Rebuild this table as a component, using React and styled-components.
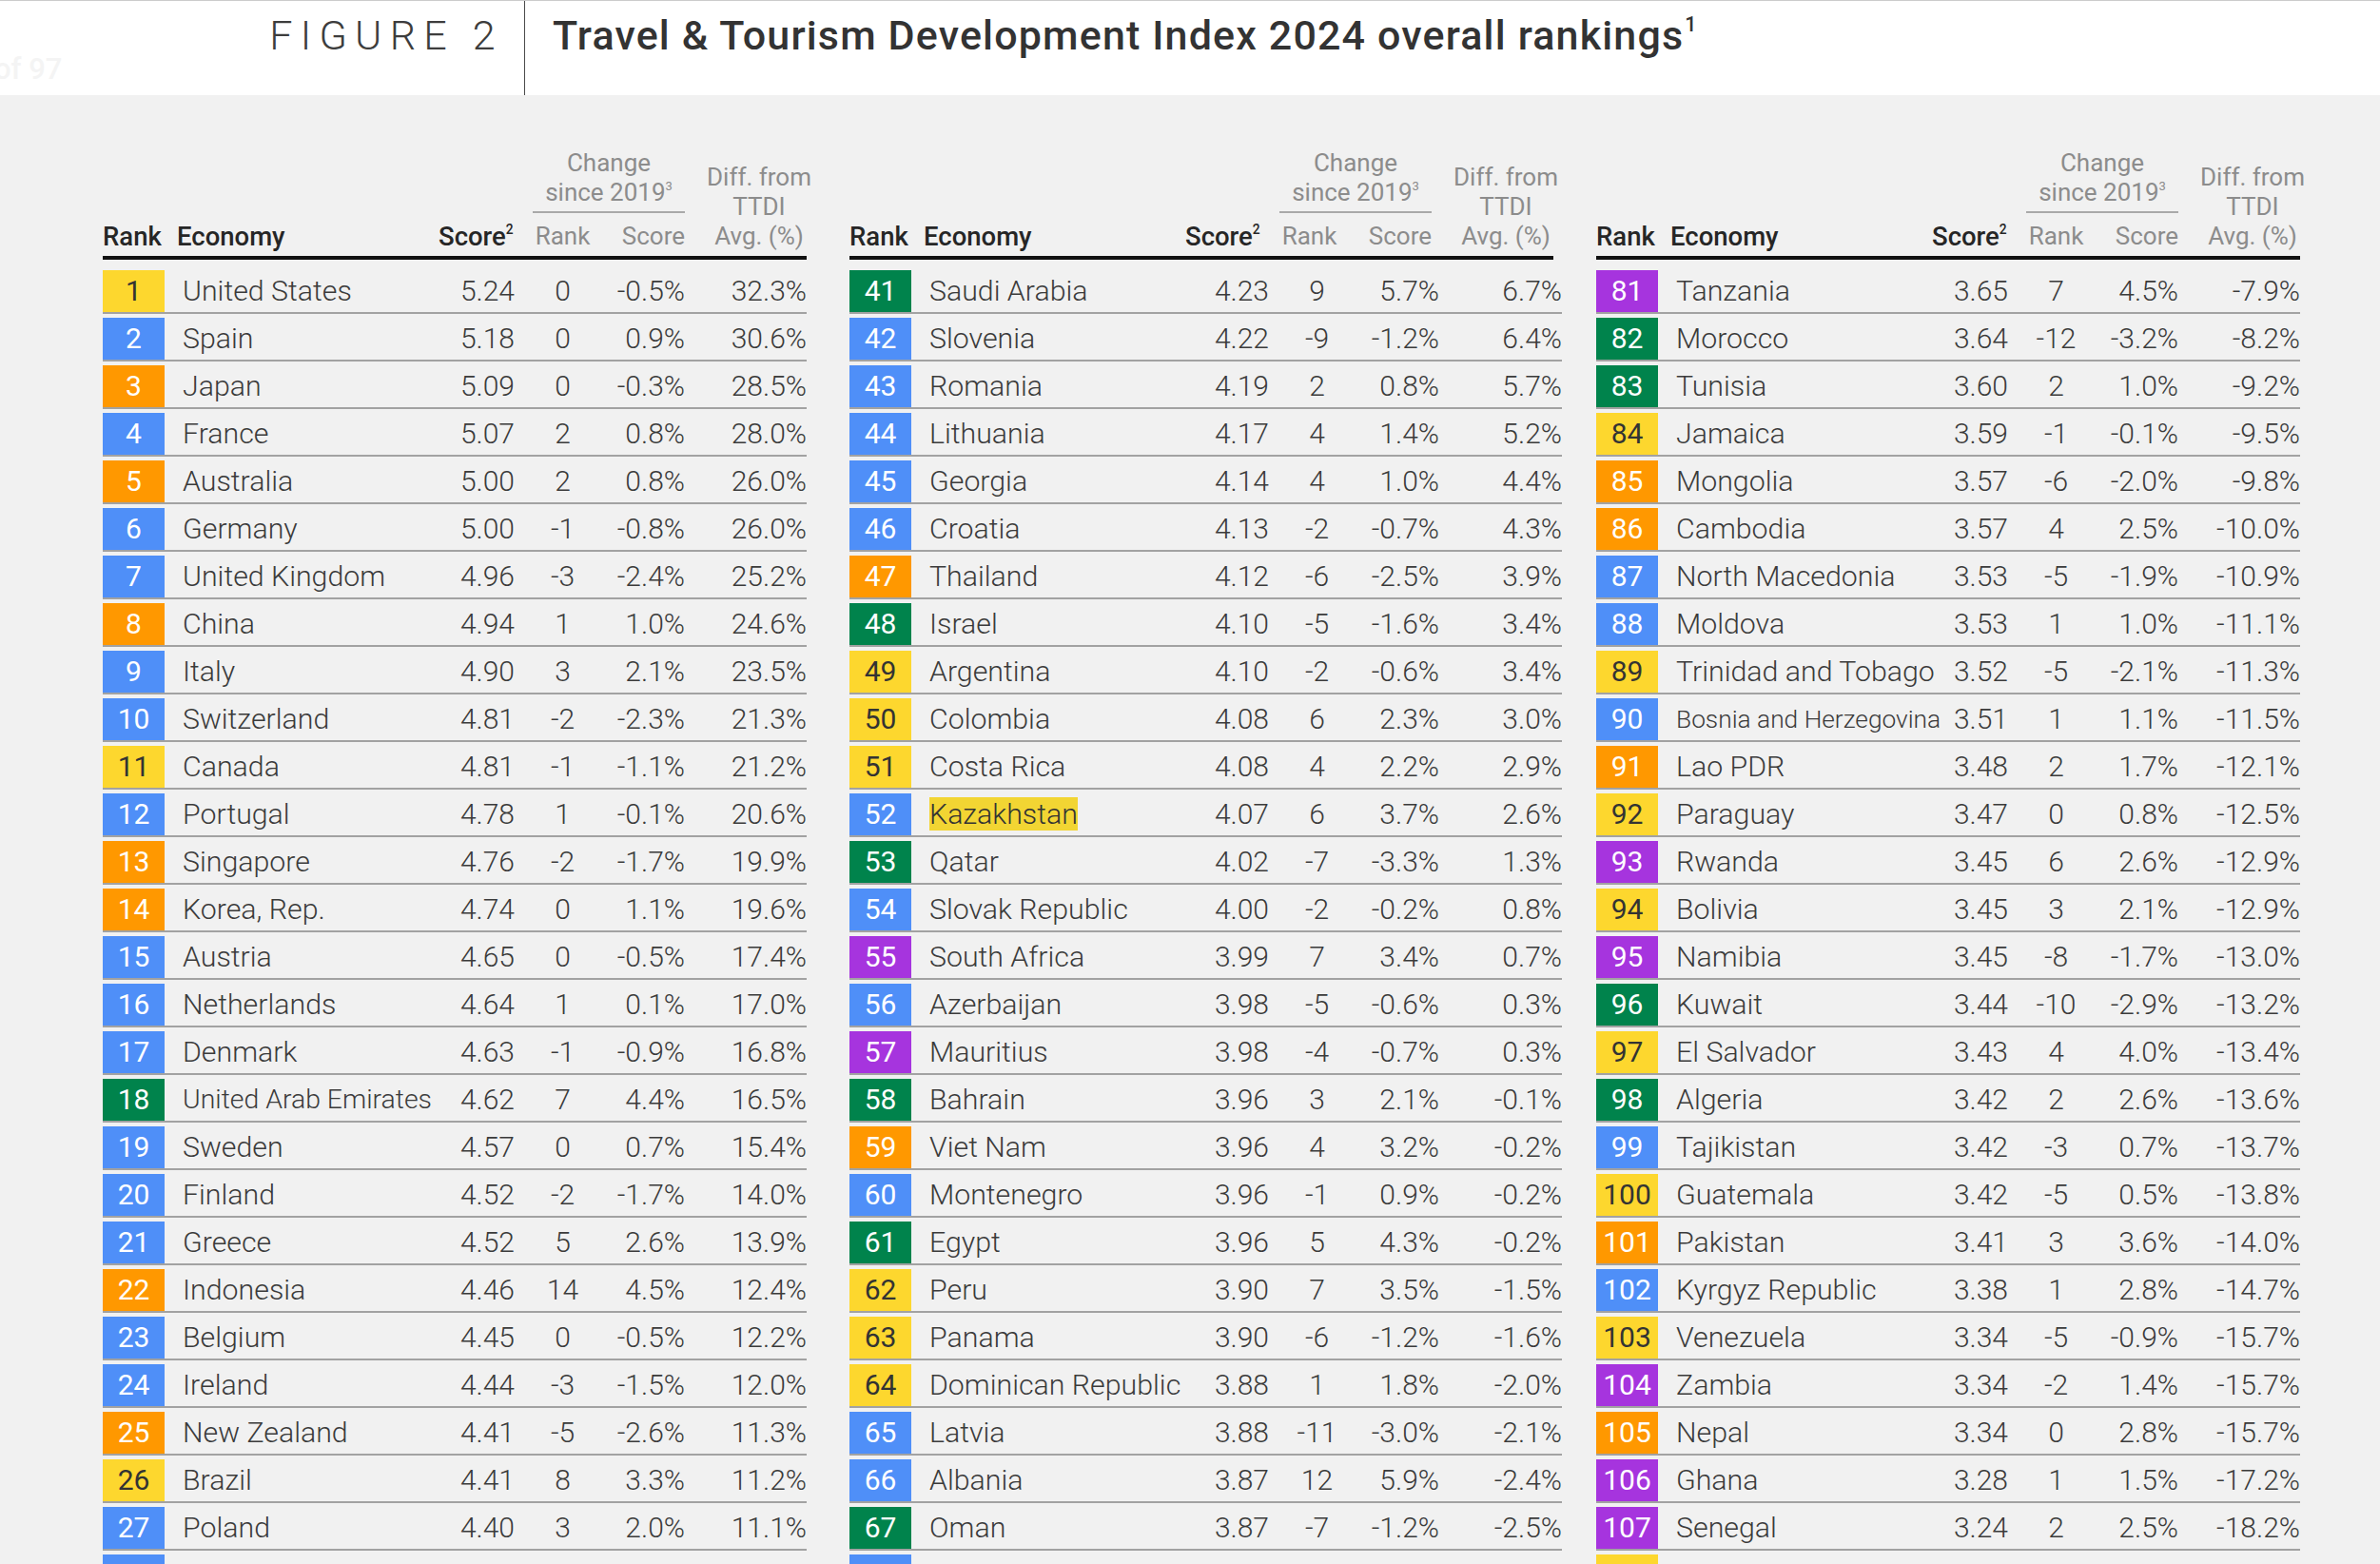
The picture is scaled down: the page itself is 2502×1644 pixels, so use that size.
import React from 'react';
import styled, { createGlobalStyle } from 'styled-components';

const GlobalStyle = createGlobalStyle`
  html, body {
    margin: 0;
    padding: 0;
    background: #f1f1f1;
  }
  body {
    font-family: Roboto, "Liberation Sans", Arial, sans-serif;
    color: #3b3b3b;
  }
`;

// region colours of the rank boxes
const REGION = {
    am: '#fdd72e',
    eu: '#4f8ff8',
    ap: '#ff9800',
    me: '#00834c',
    af: '#a634de',
};

const COLS = (wide) => `65px ${wide ? 296 : 288}px 80px 82px 97px ${wide ? 129 : 128}px`;

const Page = styled.div`
  width: 100%;
  min-width: 2502px;
  overflow: hidden;
`;

const TopBar = styled.header`
  display: flex;
  height: 99px;
  background: #fff;
  border-top: 1px solid #cbcbcb;
`;

const FigureCell = styled.div`
  box-sizing: border-box;
  width: 552px;
  flex: none;
  display: flex;
  justify-content: space-between;
  align-items: flex-start;
  padding-right: 22px;
  border-right: 1px solid #4a4a4a;
  overflow: hidden;
`;

const Ghost = styled.span`
  margin: 54px 0 0 -6px;
  font-size: 31px;
  line-height: 36px;
  font-weight: 500;
  color: #f4f4f4;
`;

const FigureLabel = styled.span`
  margin-top: 11px;
  font-size: 43px;
  line-height: 50px;
  font-weight: 300;
  letter-spacing: 8.3px;
  color: #3d3d3d;
`;

const Title = styled.h1`
  margin: 0;
  padding: 11px 0 0 29px;
  font-size: 43px;
  line-height: 50px;
  font-weight: 500;
  letter-spacing: 1.15px;
  color: #333;
  white-space: nowrap;

  sup {
    font-size: 0.5em;
    line-height: 0;
    vertical-align: 0.9em;
    margin-left: 1px;
  }
`;

const Board = styled.main`
  display: flex;
  align-items: flex-start;
  gap: 45px;
  padding: 56px 0 0 108px;
`;

const Table = styled.section`
  width: 740px;
  flex: none;
`;

const HeadGrid = styled.div`
  display: grid;
  grid-template-columns: ${COLS(false)};
  align-items: end;
  padding-bottom: 5px;
  border-bottom: 4px solid #111;
  line-height: 31px;
  white-space: nowrap;

  sup {
    font-size: 0.5em;
    line-height: 0;
    vertical-align: 0.85em;
  }
`;

const HeadStrong = styled.div`
  font-size: 27.5px;
  font-weight: 500;
  color: #262626;
  text-align: ${(p) => p.$align || 'left'};
  padding-left: ${(p) => p.$indent || 0}px;
  padding-right: ${(p) => p.$trail || 0}px;
`;

const HeadMuted = styled.div`
  font-size: 26px;
  font-weight: 400;
  color: #8c8c8c;
`;

const ChangeGroup = styled.div`
  grid-column: 4 / 6;
  display: grid;
  grid-template-columns: 82px 97px;
`;

const ChangeTitle = styled(HeadMuted)`
  grid-column: 1 / 3;
  margin: 0 0 9.5px 19px;
  padding-bottom: 3.5px;
  border-bottom: 2px solid #a9a9a9;
  text-align: center;
`;

const SubHead = styled(HeadMuted)`
  text-align: ${(p) => p.$align};
  padding-left: ${(p) => p.$indent || 0}px;
`;

const DiffHead = styled(HeadMuted)`
  text-align: center;
  padding-left: 16px;
  margin-right: -12px;
`;

const Body = styled.div`
  padding-top: 11px;
  margin-right: ${(p) => (p.$wide ? -9 : 0)}px;
`;

const Row = styled.div`
  display: grid;
  grid-template-columns: ${(p) => COLS(p.$wide)};
  align-items: center;
  height: 44px;
  margin-bottom: 4px;
  border-bottom: 2px solid #a2a2a2;
  font-size: 30px;
  line-height: 44px;
  font-weight: 300;
  color: #3b3b3b;
  white-space: nowrap;
`;

const RankBox = styled.div`
  height: 44px;
  background: ${(p) => REGION[p.$region]};
  color: ${(p) => (p.$region === 'am' ? '#333' : '#fff')};
  font-weight: 400;
  text-align: center;
`;

const Name = styled.div`
  padding-left: 19px;
  font-size: ${(p) => p.$size || 30.3}px;
`;

const Marked = styled.span`
  background: #f2d533;
  color: #333;
`;

const Num = styled.div`
  text-align: ${(p) => p.$align || 'right'};
  padding-left: ${(p) => p.$indent || 0}px;
`;

const SMALL = {
    'United Arab Emirates': 28.4,
    'Bosnia and Herzegovina': 26.3,
};

const MARKED = ['Kazakhstan'];

const parse = (lines) =>
    lines.map((l) => {
        const [rank, name, score, dRank, dScore, diff, region] = l.split('|');
        return { rank, name, score, dRank, dScore, diff, region };
    });

const TABLES = [
    parse([
        '1|United States|5.24|0|-0.5%|32.3%|am',
        '2|Spain|5.18|0|0.9%|30.6%|eu',
        '3|Japan|5.09|0|-0.3%|28.5%|ap',
        '4|France|5.07|2|0.8%|28.0%|eu',
        '5|Australia|5.00|2|0.8%|26.0%|ap',
        '6|Germany|5.00|-1|-0.8%|26.0%|eu',
        '7|United Kingdom|4.96|-3|-2.4%|25.2%|eu',
        '8|China|4.94|1|1.0%|24.6%|ap',
        '9|Italy|4.90|3|2.1%|23.5%|eu',
        '10|Switzerland|4.81|-2|-2.3%|21.3%|eu',
        '11|Canada|4.81|-1|-1.1%|21.2%|am',
        '12|Portugal|4.78|1|-0.1%|20.6%|eu',
        '13|Singapore|4.76|-2|-1.7%|19.9%|ap',
        '14|Korea, Rep.|4.74|0|1.1%|19.6%|ap',
        '15|Austria|4.65|0|-0.5%|17.4%|eu',
        '16|Netherlands|4.64|1|0.1%|17.0%|eu',
        '17|Denmark|4.63|-1|-0.9%|16.8%|eu',
        '18|United Arab Emirates|4.62|7|4.4%|16.5%|me',
        '19|Sweden|4.57|0|0.7%|15.4%|eu',
        '20|Finland|4.52|-2|-1.7%|14.0%|eu',
        '21|Greece|4.52|5|2.6%|13.9%|eu',
        '22|Indonesia|4.46|14|4.5%|12.4%|ap',
        '23|Belgium|4.45|0|-0.5%|12.2%|eu',
        '24|Ireland|4.44|-3|-1.5%|12.0%|eu',
        '25|New Zealand|4.41|-5|-2.6%|11.3%|ap',
        '26|Brazil|4.41|8|3.3%|11.2%|am',
        '27|Poland|4.40|3|2.0%|11.1%|eu',
        '28|Czech Republic|4.38|-2|-0.9%|10.6%|eu',
    ]),
    parse([
        '41|Saudi Arabia|4.23|9|5.7%|6.7%|me',
        '42|Slovenia|4.22|-9|-1.2%|6.4%|eu',
        '43|Romania|4.19|2|0.8%|5.7%|eu',
        '44|Lithuania|4.17|4|1.4%|5.2%|eu',
        '45|Georgia|4.14|4|1.0%|4.4%|eu',
        '46|Croatia|4.13|-2|-0.7%|4.3%|eu',
        '47|Thailand|4.12|-6|-2.5%|3.9%|ap',
        '48|Israel|4.10|-5|-1.6%|3.4%|me',
        '49|Argentina|4.10|-2|-0.6%|3.4%|am',
        '50|Colombia|4.08|6|2.3%|3.0%|am',
        '51|Costa Rica|4.08|4|2.2%|2.9%|am',
        '52|Kazakhstan|4.07|6|3.7%|2.6%|eu',
        '53|Qatar|4.02|-7|-3.3%|1.3%|me',
        '54|Slovak Republic|4.00|-2|-0.2%|0.8%|eu',
        '55|South Africa|3.99|7|3.4%|0.7%|af',
        '56|Azerbaijan|3.98|-5|-0.6%|0.3%|eu',
        '57|Mauritius|3.98|-4|-0.7%|0.3%|af',
        '58|Bahrain|3.96|3|2.1%|-0.1%|me',
        '59|Viet Nam|3.96|4|3.2%|-0.2%|ap',
        '60|Montenegro|3.96|-1|0.9%|-0.2%|eu',
        '61|Egypt|3.96|5|4.3%|-0.2%|me',
        '62|Peru|3.90|7|3.5%|-1.5%|am',
        '63|Panama|3.90|-6|-1.2%|-1.6%|am',
        '64|Dominican Republic|3.88|1|1.8%|-2.0%|am',
        '65|Latvia|3.88|-11|-3.0%|-2.1%|eu',
        '66|Albania|3.87|12|5.9%|-2.4%|eu',
        '67|Oman|3.87|-7|-1.2%|-2.5%|me',
        '68|Serbia|3.86|-4|-0.9%|-2.6%|eu',
    ]),
    parse([
        '81|Tanzania|3.65|7|4.5%|-7.9%|af',
        '82|Morocco|3.64|-12|-3.2%|-8.2%|me',
        '83|Tunisia|3.60|2|1.0%|-9.2%|me',
        '84|Jamaica|3.59|-1|-0.1%|-9.5%|am',
        '85|Mongolia|3.57|-6|-2.0%|-9.8%|ap',
        '86|Cambodia|3.57|4|2.5%|-10.0%|ap',
        '87|North Macedonia|3.53|-5|-1.9%|-10.9%|eu',
        '88|Moldova|3.53|1|1.0%|-11.1%|eu',
        '89|Trinidad and Tobago|3.52|-5|-2.1%|-11.3%|am',
        '90|Bosnia and Herzegovina|3.51|1|1.1%|-11.5%|eu',
        '91|Lao PDR|3.48|2|1.7%|-12.1%|ap',
        '92|Paraguay|3.47|0|0.8%|-12.5%|am',
        '93|Rwanda|3.45|6|2.6%|-12.9%|af',
        '94|Bolivia|3.45|3|2.1%|-12.9%|am',
        '95|Namibia|3.45|-8|-1.7%|-13.0%|af',
        '96|Kuwait|3.44|-10|-2.9%|-13.2%|me',
        '97|El Salvador|3.43|4|4.0%|-13.4%|am',
        '98|Algeria|3.42|2|2.6%|-13.6%|me',
        '99|Tajikistan|3.42|-3|0.7%|-13.7%|eu',
        '100|Guatemala|3.42|-5|0.5%|-13.8%|am',
        '101|Pakistan|3.41|3|3.6%|-14.0%|ap',
        '102|Kyrgyz Republic|3.38|1|2.8%|-14.7%|eu',
        '103|Venezuela|3.34|-5|-0.9%|-15.7%|am',
        '104|Zambia|3.34|-2|1.4%|-15.7%|af',
        '105|Nepal|3.34|0|2.8%|-15.7%|ap',
        '106|Ghana|3.28|1|1.5%|-17.2%|af',
        '107|Senegal|3.24|2|2.5%|-18.2%|af',
        '108|Honduras|3.23|-3|-0.4%|-18.5%|am',
    ]),
];

const TableHead = () => (
    <HeadGrid>
        <HeadStrong>Rank</HeadStrong>
        <HeadStrong $indent={13}>Economy</HeadStrong>
        <HeadStrong $align="right" $trail={6}>
            Score<sup>2</sup>
        </HeadStrong>
        <ChangeGroup>
            <ChangeTitle>
                Change
                <br />
                since 2019<sup>3</sup>
            </ChangeTitle>
            <SubHead $align="center" $indent={19}>Rank</SubHead>
            <SubHead $align="right">Score</SubHead>
        </ChangeGroup>
        <DiffHead>
            Diff. from
            <br />
            TTDI
            <br />
            Avg. (%)
        </DiffHead>
    </HeadGrid>
);

const RankTable = ({ rows, wide }) => (
    <Table>
        <TableHead />
        <Body $wide={wide}>
            {rows.map((r) => (
                <Row key={r.rank} $wide={wide}>
                    <RankBox $region={r.region}>{r.rank}</RankBox>
                    <Name $size={SMALL[r.name]}>
                        {MARKED.includes(r.name) ? <Marked>{r.name}</Marked> : r.name}
                    </Name>
                    <Num>{r.score}</Num>
                    <Num $align="center" $indent={19}>
                        {r.dRank}
                    </Num>
                    <Num>{r.dScore}</Num>
                    <Num>{r.diff}</Num>
                </Row>
            ))}
        </Body>
    </Table>
);

export default function App() {
    return (
        <Page>
            <GlobalStyle />
            <TopBar>
                <FigureCell>
                    <Ghost>of 97</Ghost>
                    <FigureLabel>FIGURE 2</FigureLabel>
                </FigureCell>
                <Title>
                    Travel &amp; Tourism Development Index 2024 overall rankings<sup>1</sup>
                </Title>
            </TopBar>
            <Board>
                {TABLES.map((rows, i) => (
                    <RankTable key={i} rows={rows} wide={i === 1} />
                ))}
            </Board>
        </Page>
    );
}
